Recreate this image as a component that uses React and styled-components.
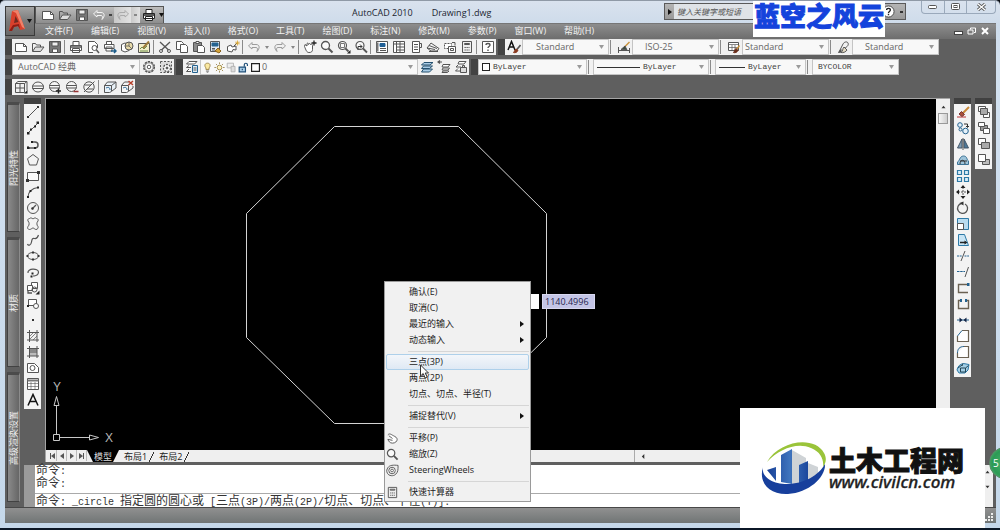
import React from "react";
import styled, { createGlobalStyle, css } from "styled-components";

const ui = `"Open Sans", "Noto Sans CJK SC", sans-serif`;
const mono = `"Liberation Mono", "Noto Sans CJK SC", monospace`;

const Global = createGlobalStyle`
  *, *::before, *::after { box-sizing: border-box; }
  body { margin: 0; background: #0b0f16; font-family: ${ui}; font-size: 9px; color: #222; overflow: hidden; }
  button, input, select { font: inherit; color: inherit; margin: 0; padding: 0; border: 0; background: none; border-radius: 0; outline: none; }
  button { display: inline-flex; align-items: center; justify-content: center; cursor: default; }
  svg { display: block; flex: none; }
`;

/* ---------- icons ---------- */

const I = {
  new: <><path d="M1.500 3.500h8l3 3v5h-11z" fill="#fff" /><path d="M9.500 3.500v3h3" /></>,
  open: <><path d="M1.500 11V3.500h3l1 1.500h4V7" /><path d="M1.500 11.500 4.500 7h8.500l-3.500 4.500z" fill="#ddd" /></>,
  save: <><path d="M1.500 1.500h11v11h-11z" fill="#777" /><path d="M4 2h6v4H4z" fill="#eee" /><path d="M4.500 9h5v3.500h-5z" fill="#fff" /></>,
  print: <><path d="M4 5V1.500h6V5M2 5.500h10.500v5H1.500v-5zM3.500 8.500h7v4h-7z" fill="#fff" /><path d="M2 7h10" strokeWidth="1.500" /></>,
  preview: <><path d="M7 12.500H2.500v-11h6l3 3V8" fill="#fff" /><circle cx="8.500" cy="8" r="2.500" fill="#fff" /><path d="m10.500 10 2.500 3" strokeWidth="1.500" /></>,
  plot: <><path d="M3.500 4.500v-3h5v3M1.500 4.500h9.500v4H1.500zM3 7h6v4H3z" fill="#fff" /><path d="M8 11h5M11 9l2 2-2 2" stroke="#1f5f8c" strokeWidth="1.500" /></>,
  globe: <><path d="M1.500 4.500 5 3l4 1.500v6L5 12l-3.500-1.500z" fill="#fff" /><circle cx="9" cy="6" r="4" fill="#e6d9a8" /><path d="M9 2v4l3 3M9 6H5" strokeWidth=".8" /></>,
  markup: <><path d="M1.500 3.500h11v9h-11z" fill="#f2eec8" /><path d="m3 9 2-2 2 2 3-3M3 11h8" stroke="#6b8c4a" /><path d="m6 8 6-6.500" stroke="#9c7a3a" strokeWidth="2" /></>,
  cut: <><path d="m2 2 8.500 8M12 2 3.500 10" strokeWidth="1.300" /><circle cx="3" cy="11" r="1.500" /><circle cx="11" cy="11" r="1.500" /></>,
  copy: <><path d="M1.500 1.500h5l2 2v6h-7z" fill="#fff" /><path d="M5.500 4.500h5l2 2v6h-7z" fill="#fff" /></>,
  paste: <><path d="M1.500 2.500h8v9h-8z" fill="#8b8b8b" /><path d="M4 1.500h3v2H4z" fill="#fff" /><path d="M5.500 5.500h5l2 2v5h-7z" fill="#fff" /></>,
  match: <><path d="M1.500 1.500h9v10h-9z" fill="#dfe9f2" /><path d="M3 3h6v3H3z" fill="#24628f" stroke="#24628f" /><path d="M3 8.500h3M3 10h3" /><path d="m6 11 3-3 3 3-2 2z" fill="#d5a43b" stroke="#8a6420" /></>,
  block: <><path d="M1.500 6.500 5 5l1 2 4-1v4l-3-.5-1 2.500-4.500-1z" fill="#fff" /><path d="m8 6 3-3" /><path d="M11.500.5v5M9 3h5M10 1.500l3 3M13 1.500l-3 3" stroke="#d9a52e" strokeWidth=".8" /></>,
  undo: <path d="M5 2.500 1.500 6 5 9V7.500h4c1.500 0 2 1.500 1 4 3-3 3-7-1-7H5z" />,
  redo: <path d="M9 2.500 12.500 6 9 9V7.500H5c-1.500 0-2 1.500-1 4-3-3-3-7 1-7h4z" />,
  pan: <><path d="M2 4.500 4 6V3.500c1-1 1.500 0 1.500 1 .5-1.500 2-1 2 0 1-1 2 0 2 1v4c0 2-1 3-3.500 3S3 10 1.500 6.500z" fill="#fff" /><path d="M11 .5v5M8.500 3h5" stroke="#222" strokeWidth="1.300" /></>,
  zoom: <><circle cx="5.500" cy="5.500" r="4" fill="#fafafa" strokeWidth="1.300" /><path d="m8.500 8.500 4 4" strokeWidth="2" /></>,
  zoomwin: <><circle cx="5.500" cy="5.500" r="4" fill="#fafafa" strokeWidth="1.200" /><path d="M3.500 3.500h4v4h-4z" strokeWidth=".8" /><path d="m8.500 8.500 3 3" strokeWidth="1.800" /><path d="m10 13.500 3.500-3.500v3.500z" fill="#222" stroke="none" /></>,
  zoomprev: <><circle cx="6" cy="5.500" r="4" fill="#fafafa" strokeWidth="1.200" /><path d="m9 8.500 4 4" strokeWidth="1.800" /><path d="M4 10V6.500h4M6 4.500l2 2-2 2" stroke="#333" /></>,
  props: <><path d="M1.500 1.500h11v11h-11z" fill="#fff" /><path d="M2.500 2.500v9" strokeWidth="2" stroke="#777" /><path d="M5 3.500h5v3H5z" fill="#1f5f96" stroke="#1f5f96" /><path d="M5 8.500h6M5 10.500h6" /></>,
  design: <><path d="M1.500 1.500h11v11h-11z" fill="#fff" /><path d="M1.500 4h11M4.500 2v10M8 2v10M4.500 7h8M4.500 10h8" /></>,
  palette: <><path d="M3.500 1.500h7v11h-7z" fill="#fff" /><path d="M10.500 3.500h2v4h-2M5 4.500h4M5 7h4M5 9.500h4" /></>,
  sheet: <path d="m1 8 4-5 8 5.500-2 2.500H5L1 8l8 1.500M3 5.500l8 3M3 11.500h9" fill="#f4f4f4" />,
  markset: <><path d="M1.500 3.500h7v5h-7z" fill="#fff" strokeDasharray="2 1" /><path d="M5.500 6.500h7v6h-7z" fill="#fff" /><path d="M9 2.500h3v3M7.500 8.500h3v2h-3z" /></>,
  calc: <><path d="M2.500 1.500h9v11h-9z" fill="#eee" /><path d="M4.500 3.500h5v1h-5z" fill="#fff" /><path d="M4.500 7.500h5M4.500 10h5" strokeDasharray="1.300 .7" /></>,
  help: <><path d="M1.500 1.500h11v11h-11z" fill="#fff" /><path d="M5 5c0-2 4-2 4 0 0 1.500-2 1.500-2 3M7 9.500V11" strokeWidth="1.400" /></>,
  textstyle: <><path d="M1 10 4.500 1.500 8 10M2.300 7h4.500" stroke="#111" strokeWidth="1.500" /><path d="m13.500 5-4 5" stroke="#555" strokeWidth="1.600" /><path d="m9 9 2 1.500c-1 2-3 2.500-4.500 2 1-1 1-2.500 2.500-3.500z" fill="#8b3b20" stroke="#8b3b20" /></>,
  dimstyle: <><path d="M1.500 7v6M12.500 8v5M2 10.500h10" /><path d="m12.500 2-5 5" strokeWidth="1.500" stroke="#c9923b" /><path d="M8 6 4 9.500l6 .5z" fill="#3c4c3c" /></>,
  tablestyle: <><path d="M1.500 2.500h10v8h-10z" fill="#fff" /><path d="M1.500 4.500h10M5 5v5M8 5v5M2 7.500h9" strokeWidth=".7" /><path d="m12.500 5.500-3 4" stroke="#c9923b" strokeWidth="1.400" /><path d="m9 8.500 2 2c-1 2-3 2.500-4.500 2 1-1 1-3 2.500-4z" fill="#6b2f1c" stroke="#6b2f1c" /></>,
  leaderstyle: <><path d="m2 12 4-8c1-2 4-3 5-1s-1 4-3 5" /><path d="m7 7 3 3c-1 2-4 3-6 2.500C6 11 5.500 8.500 7 7z" fill="#e4dbc4" /><path d="m1.500 12.500 2.500-3v2.500z" fill="#444" /></>,
  gear: <><circle cx="7" cy="7" r="5.300" strokeWidth="1.500" strokeDasharray="2.300 1" /><circle cx="7" cy="7" r="4.200" fill="#fff" strokeWidth=".8" /><circle cx="7" cy="7" r="1.800" /></>,
  wsgear: <><path d="M1.500 1.500h11v11h-11z" fill="#ddd" strokeDasharray="2 1.500" /><circle cx="8" cy="8" r="3.500" fill="#fff" strokeDasharray="2 1" strokeWidth="1.300" /><circle cx="8" cy="8" r="1" fill="#444" /></>,
  layers: <><path d="M4 1.500h8L9.500 4H1.500zM4 5.500 1.500 7.500H6M4 9 1.500 11.500H6" fill="#fff" /><path d="M7.500 5.500h5v7h-5z" fill="#dcecf7" stroke="#24628f" /><path d="M8.500 8h3M8.500 10h3" /></>,
  bulb: <><path d="M7 1.500c-4 0-4 4-2 6v2h4v-2c2-2 2-6-2-6z" fill="#fbe9a2" stroke="#8d7433" /><path d="M5 11.500h4M6 13h2" /></>,
  sun: <><circle cx="7" cy="7" r="3" fill="#fff3bd" stroke="#8d7433" /><path d="M7 .500v2M7 11.500v2M.500 7h2M11.500 7h2M2.500 2.500l1.300 1.300M10.200 10.200l1.300 1.300M11.500 2.500l-1.300 1.300M3.800 10.200l-1.300 1.300" stroke="#8d7433" /></>,
  freeze: <g stroke="#aaa"><path d="M1.500 1.500h8v6h-8z" fill="#eee" /><path d="M6.500 5.500h5v7h-5z" fill="#ddd" /></g>,
  lock: <><path d="M1.500 6.500h8v6h-8z" fill="#a9cce6" stroke="#1f4f78" strokeWidth="1.500" /><path d="M8 6V3.500c0-2.500 4-2.500 4 0V5M5.500 8.500v2" stroke="#1f4f78" strokeWidth="1.500" /></>,
  square: <path d="M2 2h10v10H2z" fill="#fff" stroke="#222" strokeWidth="1.500" />,
  laycur: <><path d="M4 2.500h9l-3 2.500H1.500zM3.500 6h9l-3 2.500H1.500zM3.500 9h9l-3 3H1.500z" fill="#a9cce6" stroke="#24506e" /></>,
  layprev: <><path d="M6 4.500h7L11 7H5zM6 8h6.500L11 10H5zM6 11h6l-1.500 1.500H5z" fill="#fff" /><path d="M1 2h4M3 .5 1 2l2 1.500" strokeWidth="1.200" /></>,
  laystate: <><path d="M5 1.500h7L10 4H4zM4 5 2 7h5M4 8.500 1.500 11H6" fill="#fff" /><path d="M6.500 7.500h6v5h-6zM8.500 7V5.500h2V7" fill="#ddd" /></>,
  box: <><path d="M1.500 3.500h9v9h-9zM4 1.500h9v9M1.500 3.500 4 1.500M10.500 3.500l2.500-2M6 3v9M1.500 8h9" /><path d="m10 13.500 3.500-3.500v3.500z" fill="#222" stroke="none" /></>,
  sphere: <><ellipse cx="7" cy="7" rx="5.500" ry="5" fill="#f5f5f5" /><path d="M1.500 6h11M1.500 8.500h11" /></>,
  sphereplus: <><ellipse cx="6.500" cy="6.500" rx="5" ry="5" fill="#f5f5f5" /><path d="M1.500 5.500h10M1.500 8h10" /><path d="M10.500 8.500v5M8 11h5" stroke="#222" strokeWidth="1.500" /></>,
  sphereminus: <><ellipse cx="6.500" cy="6.500" rx="5" ry="5" fill="#f5f5f5" /><path d="M1.500 5.500h10M1.500 8h10" /><path d="M8.500 11.500h5" stroke="#933" strokeWidth="1.500" /></>,
  spherecut: <><circle cx="7" cy="7" r="5.200" fill="#f5f5f5" /><path d="M2 12 12.500 1.500M3 5h6M5 9h6" /></>,
  cube: <><path d="M1.500 5.500h7v6l-2 1h-5zM1.500 5.500l3-3.500H13v6l-4 3M8.500 5.500 13 2" fill="#e8f1f8" /><path d="M3 8c2-1 4-1 4 2" stroke="#24628f" /></>,
  cubex: <><path d="M1.500 5.500h7v6l-2 1h-5zM1.500 5.500l3-3.500H9M13 6v2l-4 3" fill="#f5f5f5" /><path d="M3 8c2-1 4-1 4 2" stroke="#24628f" /><path d="m8.500 1 4.500 4M13 1 8.500 5" stroke="#b5402c" strokeWidth="1.500" /></>,
  line: <><path d="m2 12 10-10" /><path d="M1 11h2v2H1zM11 1h2v2h-2z" fill="#333" stroke="none" /></>,
  xline: <><path d="m2 12 10-10" /><path d="M1 11h2.500v2.500H1zM10.500 .5H13V3h-2.500zM4 7.500h2v2H4zM8 4.500h2v2H8z" fill="#222" stroke="none" /></>,
  pline: <><path d="M2 11h7c4 0 4-6 0-6H6M2 11V9" strokeWidth="1.500" /><path d="M1 10h2.500v2H1zM8 10h2v2H8zM5 4h2v2H5z" fill="#222" stroke="none" /></>,
  polygon: <path d="m7 1.500 5.500 4.200-2 6.300h-7l-2-6.300z" />,
  rect: <><path d="M1.500 3.500h11v8h-11z" fill="#fafafa" /><path d="M0 10h3v3H0zM11 2h3v3h-3z" fill="#333" stroke="none" /></>,
  arc: <><path d="M2 12c0-5 4-9 10-9.500" strokeWidth="1.200" /><path d="M1 11h2v2H1zM3.500 5h2v2h-2zM11 1.500h2v2h-2z" fill="#222" stroke="none" /></>,
  circle: <><circle cx="7" cy="7" r="5.500" /><path d="m6 8 4-4" strokeWidth="1.300" /><circle cx="6.500" cy="7.500" r="1" fill="#333" /></>,
  cloud: <path d="M3.500 1.500c1-1 2.500-.5 3.500.5 1-1 2.500-1.500 3.500-.5 1.500 0 2 1.500 1.500 2.500-1.500 1.500-1.500 4 0 5.500.5 1.500-.5 3-2 3-1 0-2-1.500-3-1.500s-2 1.500-3.500 1.500C2 12.500 1 11 2 9.500c1.500-1.500 1.500-4 0-5.500-.5-1 0-2.500 1.500-2.500z" />,
  spline: <path d="M1.500 11c1 2.500 3.500 1 4-2s1-4 3-3.500S11.500 5 12.500 2" strokeWidth="1.200" />,
  ellipse: <><ellipse cx="7" cy="7" rx="5.500" ry="3.500" /><path d="M0.500 6h2v2h-2zM11.500 6h2v2h-2zM6 2.500h2v2H6zM6 9.500h2v2H6z" fill="#333" stroke="none" /></>,
  ellipsearc: <><path d="M2 8c-1-5 10.500-5 10.500-1S7 11 7 11" strokeWidth="1.200" /><path d="M5.500 7.500h2v2h-2zM4.500 10.500h2v2h-2z" fill="#222" stroke="none" /></>,
  insert: <><path d="M5.500 1.500h6v6h-6z" fill="#fff" /><path d="M1.500 4.500h5v5h-5z" fill="#fff" /><circle cx="8.500" cy="8.500" r="2.500" /><path d="M2 9v3h4" strokeWidth="1.300" /><path d="m9.500 13.500 4-4v4z" fill="#222" stroke="none" /></>,
  makeblock: <><path d="M2.500 2.500h8v6h-8z" fill="#fff" /><circle cx="10" cy="9" r="2.500" fill="#fff" /><path d="M1 8h2v2H1z" fill="#222" stroke="none" /></>,
  point: <path d="M6 6h2v2H6z" fill="#333" stroke="none" />,
  hatch: <><path d="M3.500 1v12M11 1v12M1 3.500h12M1 11h12" /><path d="m4 7 3-3M4 10l6-6M7 11l4-4" strokeWidth=".7" /></>,
  gradient: <><path d="M4 4h7v4H4z" fill="#888" stroke="none" /><path d="M4 8h7v3H4z" fill="#bbb" stroke="none" /><path d="M3.500 1v12M11 1v12M1 3.500h12M1 11h12" /></>,
  region: <><path d="M1.500 2.500h7l4 4v5h-11z" fill="#fff" /><circle cx="6.500" cy="7" r="2.500" /></>,
  table: <><path d="M1.500 1.500h11v11h-11z" fill="#fff" /><path d="M1.500 3.500h11" strokeWidth="2" stroke="#777" /><path d="M2 6.500h10M2 9.500h10M5 5v7M9 5v7" strokeWidth=".6" /></>,
  mtext: <path d="M2 12.500 7 1.500l5 11M3.800 8.500h6.400" stroke="#111" strokeWidth="1.500" />,
  erase: <><path d="M1 12h9" stroke="#b33" /><path d="m13 2-6 6" stroke="#c98a3a" strokeWidth="2" /><path d="m5.500 6.500 3 3L6 11.500 3 9z" fill="#a8503a" stroke="#733" /></>,
  copyobj: <g stroke="#24628f"><circle cx="4" cy="4" r="2.300" fill="#e5f1f9" /><circle cx="9.500" cy="10" r="2.800" fill="#e5f1f9" /><circle cx="4.500" cy="8.500" r="1.500" /><path d="M8 3h3.500v3M10 5l1.500 1.500L13 5" stroke="#333" /></g>,
  mirror: <><path d="M6 2 1.500 11H6z" fill="#7c9cb4" stroke="#456" /><path d="m8 2 4.500 9H8z" fill="#4c7898" stroke="#456" /><path d="M7 1v12" /></>,
  offset: <g stroke="#3d7395"><path d="M1.500 11.500V9c2-.5 2-6 6-6s3 4 5 5v3.500z" fill="#9ec4da" /><path d="M4 11c0-5 5-5 5 0M4 8h7" stroke="#333" /></g>,
  array: <path d="M1.500 1.500h4v4h-4zM8.500 1.500h4v4h-4zM1.500 8.500h4v4h-4zM8.500 8.500h4v4h-4z" fill="#d9edf8" stroke="#2d79a6" strokeWidth="1.200" />,
  move: <><path d="M7 2v10M2 7h10" strokeDasharray="2 1" /><path d="m7 0 2.500 3h-5zM7 14l2.500-3h-5zM0 7l3-2.500v5zM14 7l-3-2.500v5z" fill="#222" stroke="none" /></>,
  rotate: <><path d="M5.500 2.500A5 5 0 1 0 9 3" strokeWidth="1.300" /><path d="m3.500 2 4-1.500v4z" fill="#333" stroke="none" /></>,
  scale: <><path d="M1.500 1.500h11v11h-11z" fill="#b9dcf0" stroke="#2d79a6" /><path d="M1.500 6.500h6v6h-6z" fill="#fff" /></>,
  stretch: <><path d="M2.500 1.500h6l4 11h-10z" fill="#c8e4f4" stroke="#2d79a6" /><path d="M4 9.500h6" stroke="#222" strokeWidth="1.500" /><path d="m8.500 7.500 3 2-3 2z" fill="#222" stroke="none" /></>,
  trim: <><path d="M1 7h5M8.500 7H13" strokeDasharray="2 .7" stroke="#24628f" /><path d="M5 12 9 2" /></>,
  extend: <><path d="M1 6.500h8" strokeDasharray="2.500 .7" stroke="#24628f" /><path d="M9 12 12.500 2" /></>,
  breakpt: <><path d="M12 3.500H2.500v8H12" stroke="#6b6253" strokeWidth="1.400" /><path d="M11 2h2.500v3H11z" fill="#24628f" stroke="none" /></>,
  break: <><path d="M4.500 3.500h-2v8h10v-8h-2" stroke="#6b6253" strokeWidth="1.400" /><path d="M4 2h2v3H4zM9 2h2v3H9z" fill="#24628f" stroke="none" /></>,
  join: <><path d="M1 7h12" stroke="#24628f" /><path d="m3.500 4.500 3 2.500-3 2.500zM10.500 4.500l-3 2.500 3 2.500z" fill="#124" stroke="none" /></>,
  chamfer: <><path d="M6 1.500h6.500v11h-11V7" fill="#fff" stroke="#6b6253" strokeWidth="1.200" /><path d="M1.500 7 6 1.500" stroke="#24628f" /></>,
  fillet: <><path d="M8 1.500h4.500v11h-11V8" fill="#fff" stroke="#6b6253" strokeWidth="1.200" /><path d="M1.500 8c0-4 2-6.500 6.500-6.500" stroke="#24628f" /></>,
  explode: <><path d="M1 9c.5-3.500 3-6 6.500-6.500l5.500 1-1 5.500-3 3H3z" fill="#a4cfe6" stroke="#2d79a6" /><path d="M4.500 7h5v4h-5zM2 7l4-3M9.500 7l3-2.500M7 2.500 6 5" stroke="#245" /></>,
  front: <><path d="M1.500 1.500h7v5h-7zM6.500 7.500h6v5h-6z" fill="#fff" /><path d="M3.500 3.500h7v6h-7z" fill="#aaa" /></>,
  back: <><path d="M3.500 4.500h7v5h-7z" fill="#999" /><path d="M1.500 1.500h6v4h-6zM6.500 7.500h6v5h-6z" fill="#fff" /></>,
  above: <><path d="M1.500 1.500h7v6h-7z" fill="#fff" /><path d="M4.500 5.500h8v6h-8z" fill="#aaa" /></>,
  below: <><path d="M5.500 6.500h7v5h-7z" fill="#bbb" /><path d="M1.500 1.500h7v7h-7z" fill="#fff" /></>,
  hand: <><path d="M2 3c2-2 4 0 6 1s4 2 4 4-2 4-5 4-4-2-5-4l5 1M3 4l4 3" fill="#fff" /></>,
  wheel: <><path d="M2 4c2-3 6-3 11-2.500 0 5 0 7-2.500 9.500S3 13 1.500 10 1 6 2 4z" fill="#eee" /><circle cx="6.500" cy="7" r="3.500" fill="#fff" /><circle cx="6.500" cy="7" r="1.500" /></>,
};

const Icon = ({ n, size = 14, color = "#555" }) => (
  <svg width={size} height={size} viewBox="0 0 14 14" fill="none" stroke={color} aria-hidden="true">{I[n]}</svg>
);

const Caret = ({ color = "#9a9a9a" }) => (
  <svg width="5" height="4" viewBox="0 0 5 4" aria-hidden="true"><path d="M0 0h5L2.500 4z" fill={color} /></svg>
);

/* ---------- window ---------- */

const Shell = styled.div`
  position: relative;
  min-height: 100vh;
  display: flex;
  flex-direction: column;
  padding: 0 4px 5px 5px;
  background: linear-gradient(#d9e2ee, #cddbea 24px, #d3e1f0 60px, #c5d8ea);
  border-top: 1px solid #8f99a6;
  border-bottom: 2px solid #0b1726;
  border-radius: 5px 5px 0 0;
  overflow: hidden;
`;

const Header = styled.header`
  display: flex;
  align-items: flex-end;
  height: 38px;
  background: linear-gradient(transparent 22px, #5f5f5f 22px, #8d8d8d 23px, #6d6d6d);
`;

const AppButton = styled.button`
  width: 30px;
  height: 30px;
  margin: 0 0 3px 0;
  gap: 1px;
  background: linear-gradient(#a4a4a4, #7a7a7a 50%, #686868);
  border: 1px solid #3a3a3a;
`;

const HeaderMain = styled.div`
  flex: 1;
  display: flex;
  flex-direction: column;
  height: 38px;
`;

const TitleRow = styled.div`
  display: flex;
  justify-content: space-between;
  height: 22px;
`;

const QuickAccess = styled.div`
  display: flex;
  align-items: center;
  align-self: flex-end;
  height: 17px;
  width: 129px;
  padding-left: 3px;
  background: linear-gradient(#bdbdbd, #8d8d8d);
  border: 1px solid #555;
  border-bottom: 0;
`;

const ToolButton = styled.button`
  width: ${(p) => p.$w || 17}px;
  height: 16px;
  flex: none;
  opacity: ${(p) => (p.$faded ? 0.55 : 1)};
  ${(p) => p.$glow && css`background: linear-gradient(90deg, #c9c9c9, #e2e2e2);`}
`;

const Title = styled.h1`
  display: flex;
  flex: 1;
  gap: 19px;
  align-items: center;
  margin: 0;
  padding-left: 188px;
  font-size: 9px;
  font-weight: 400;
  color: #1b2531;
`;

const Search = styled.form`
  display: flex;
  align-items: center;
  width: 242px;
  height: 17px;
  margin: 2px 15px 0 0;
  border: 1px solid #5a5a5a;
  background: linear-gradient(#b5b5b5, #999);
`;

const SearchInput = styled.input`
  flex: 1;
  min-width: 0;
  height: 15px;
  padding-left: 3px;
  font-size: 8px;
  font-style: italic;
  background: #dfe3e7;
  &::placeholder { color: #555; opacity: 1; }
`;

const WindowButtons = styled.div`
  display: flex;
  width: 75px;
  height: 13px;
  border: 1px solid #9aa9bb;
  border-top: 0;
  border-radius: 0 0 4px 4px;
  button { flex: 1; border-right: 1px solid #9aa9bb; }
  button:last-child { flex: 1.300; border: 0; }
`;

const MenuBar = styled.nav`
  display: flex;
  align-items: center;
  gap: 18px;
  height: 15px;
  padding: 0 5px 0 10px;
  color: #f2f2f2;
  white-space: nowrap;
  a { color: inherit; text-decoration: none; line-height: 15px; }
`;

const MdiButtons = styled.div`
  display: flex;
  margin-left: auto;
  button { width: 13px; height: 13px; }
`;

/* ---------- toolbars ---------- */

const Frame = styled.div`
  flex: 1;
  display: flex;
  flex-direction: column;
  background: #5f5f5f;
`;

const ToolbarRows = styled.div`
  display: flex;
  flex-direction: column;
  gap: 4px;
  padding-bottom: 3px;
`;

const ToolbarRow = styled.div`
  display: flex;
  gap: 2px;
  height: 16px;
`;

const Toolbar = styled.div`
  display: flex;
  align-items: center;
  height: 16px;
  background: #f1f1f1;
  border-left: 7px solid #434343;
`;

const Divider = styled.span`
  width: ${(p) => p.$w || 4}px;
  height: 14px;
  flex: none;
  background: linear-gradient(90deg, transparent 1px, #8a8a8a 1px, #8a8a8a 2px, transparent 2px);
`;

const Combo = styled.label`
  display: flex;
  align-items: center;
  gap: ${(p) => p.$gap || 3}px;
  width: ${(p) => p.$w}px;
  height: 16px;
  padding: 0 4px 0 ${(p) => p.$pad || 3}px;
  background: #f8f8f8;
  border: 1px solid #c4c4c4;
  color: #666;
`;

const Select = styled.select`
  appearance: none;
  flex: 1;
  min-width: 0;
  height: 14px;
  line-height: 14px;
  ${(p) => p.$mono && css`font-family: ${mono}; font-size: 8px; color: #3c3c3c;`}
`;

const Stroke = styled.span`
  width: ${(p) => p.$w}px;
  height: 1px;
  background: #333;
`;

const Swatch = styled.span`
  width: 8px;
  height: 8px;
  border: 1px solid #222;
  background: #fff;
`;

function ComboBox({ w, pad, label, value, monoText, children }) {
  return (
    <Combo $w={w} $pad={pad}>
      {children}
      <Select aria-label={label} $mono={monoText}><option>{value}</option></Select>
      <Caret />
    </Combo>
  );
}

const Tools = ({ items }) =>
  items.map((it, i) => {
    if (it === "|") return <Divider key={i} />;
    if (it === "v") return <ToolButton key={i} $w={9} aria-label="更多"><svg width="4" height="3" viewBox="0 0 4 3"><path d="M0 0h4L2 3z" fill="#888" /></svg></ToolButton>;
    return <ToolButton key={i} aria-label={it} $faded={it === "undo" || it === "redo"}><Icon n={it} /></ToolButton>;
  });

/* ---------- workspace ---------- */

const Workspace = styled.div`
  flex: 1;
  display: flex;
`;

const Palettes = styled.aside`
  display: flex;
  flex-direction: column;
  gap: 5px;
  width: 19px;
  padding: 4px 4px 5px 2px;
`;

const PaletteTab = styled.button`
  flex: 1;
  border: 1px solid #424242;
  border-right-color: #8c8c8c;
  border-top: 3px solid #4b4b4b;
  background: linear-gradient(90deg, #8a8a8a, #666);
  color: #eee;
  span { writing-mode: vertical-rl; text-orientation: sideways; transform: rotate(180deg); line-height: 12px; }
`;

const Main = styled.div`
  flex: 1;
  min-width: 0;
  display: flex;
  flex-direction: column;
`;

const Upper = styled.div`
  flex: 1;
  display: flex;
  align-items: flex-start;
  gap: 4px;
  padding-right: 4px;
`;

const SideBar = styled.div`
  display: flex;
  flex-direction: column;
  width: 17px;
  padding-bottom: 1px;
  border-top: 6px solid #404040;
  background: #f3f3f3;
`;

const DrawingWindow = styled.section`
  flex: 1;
  align-self: stretch;
  display: flex;
  flex-direction: column;
  margin-bottom: 3px;
  border: 1px solid #a5a5a5;
  border-width: 1px 0 0 1px;
`;

const ViewRow = styled.div`
  flex: 1;
  display: flex;
`;

const Canvas = styled.div`
  position: relative;
  flex: 1;
  background: #000;
`;

const Shape = styled.svg`
  position: absolute;
  left: 200px;
  top: 26px;
`;

const Ucs = styled.svg`
  position: absolute;
  left: 6px;
  bottom: 4px;
`;

const VScroll = styled.div`
  display: flex;
  flex-direction: column;
  align-items: center;
  gap: 4px;
  width: 14px;
  padding-top: 6px;
  background: #efefef;
`;

const Thumb = styled.span`
  width: 10px;
  height: 11px;
  border: 1px solid #999;
  background: linear-gradient(90deg, #f6f6f6, #cfcfcf);
`;

const TabRow = styled.div`
  display: flex;
  height: 12px;
  padding-left: 1px;
  background: #efefef;
`;

const NavButton = styled.button`
  width: 10px;
  height: 11px;
  border-right: 1px solid #bbb;
`;

const Tab = styled.button`
  height: 12px;
  padding: 0 7px;
  ${(p) => p.$active
    ? css`color: #ddd; background: #000; clip-path: polygon(0 0, 100% 0, calc(100% - 6px) 100%, 6px 100%);`
    : css`padding: 0 7px 0 5px; background: linear-gradient(117deg, transparent calc(100% - 5px), #333 calc(100% - 5px), #333 calc(100% - 4px), transparent calc(100% - 4px));`}
`;

const HScroll = styled.div`
  display: flex;
  align-items: center;
  width: 316px;
  margin-left: auto;
  padding-left: 6px;
  border-left: 1px solid #aaa;
`;

/* ---------- command line ---------- */

const Command = styled.section`
  display: flex;
  height: 42px;
  margin-right: 3px;
  border-left: 11px solid #9b9b9b;
  background: #fff;
`;

const CommandText = styled.div`
  flex: 1;
  display: flex;
  flex-direction: column;
  justify-content: space-between;
  font-family: ${mono};
  font-size: 12px;
  line-height: 12px;
  color: #333;
  white-space: pre;
  p { margin: 0; padding-left: 1px; }
  small { font-size: 10px; }
`;

const Prompt = styled.p`
  && { padding-top: 2px; }
  height: 14px;
  border-top: 1px solid #aaa;
`;

const CommandScroll = styled.div`
  display: flex;
  flex-direction: column;
  justify-content: space-between;
  align-items: center;
  width: 11px;
  padding: 5px 0 18px;
  background: #efefef;
`;

const StatusBar = styled.footer`
  display: flex;
  justify-content: flex-end;
  align-items: flex-end;
  height: 16px;
  padding: 0 2px 1px;
  border-top: 1px solid #484848;
  background: linear-gradient(#909090, #707575);
`;

/* ---------- overlays ---------- */

const DynamicInput = styled.div`
  position: absolute;
  left: 500px;
  top: 293px;
  display: flex;
  gap: 3px;
  input { height: 15px; }
`;

const RadiusField = styled.input`
  && { width: 39px; background: #fff; }
`;

const ValueField = styled.input`
  && { width: 53px; padding-left: 2px; background: #c4c5e6; color: #26264f; border: 1px solid #d8d8f0; }
`;

const ContextMenu = styled.div`
  position: absolute;
  left: 384px;
  top: 280px;
  width: 147px;
  padding: 2px 1px 1px;
  background: #f1f1f1;
  border: 1px solid #9a9a9a;
  color: #1c1c1c;
`;

const MenuItem = styled.button`
  && { display: grid; }
  grid-template-columns: 23px 1fr 10px;
  align-items: center;
  width: 100%;
  height: 16px;
  text-align: left;
  line-height: 16px;
  ${(p) => p.$hot && css`
    border: 1px solid #aed0ea;
    border-radius: 2px;
    background: linear-gradient(#f3f6fa, #dfe9f4);
    line-height: 14px;
    grid-template-columns: 22px 1fr 9px;
  `}
`;

const MenuRule = styled.hr`
  height: 1px;
  margin: 3px 0 2px 22px;
  border: 0;
  background: #d6d6d6;
`;

const Cursor = styled.svg`
  position: absolute;
  left: 419px;
  top: 363px;
`;

const NameMark = styled.div`
  position: absolute;
  left: 753px;
  top: -1px;
  width: 132px;
  height: 37px;
  background: #fff;
  text-align: center;
  font: 900 26px/30px "Noto Sans CJK SC", sans-serif;
  color: #1443dc;
  -webkit-text-stroke: 1px #1443dc;
`;

const SiteLogo = styled.a`
  position: absolute;
  right: 15px;
  bottom: -2px;
  display: flex;
  align-items: center;
  gap: 1px;
  width: 245px;
  height: 122px;
  padding: 0 0 2px 21px;
  background: #fff;
  color: #111;
  text-decoration: none;
`;

const SiteName = styled.strong`
  display: block;
  font: 900 27px/28px "Noto Sans CJK SC", sans-serif;
  font-style: oblique 8deg;
  -webkit-text-stroke: 1px #111;
`;

const SiteUrl = styled.span`
  display: block;
  font: italic 500 17px/16px "Noto Sans", sans-serif;
  color: #222;
  -webkit-text-stroke: 0.300px #222;
`;

const Badge = styled.div`
  position: absolute;
  right: -21px;
  top: 446px;
  width: 32px;
  height: 32px;
  padding-left: 3px;
  border: 1px solid #5a8a66;
  border-radius: 50%;
  background: radial-gradient(circle, #45b56c, #2c9a55 60%, #5cc27e);
  color: #fff;
  font-size: 10px;
  line-height: 30px;
`;

/* ---------- data ---------- */

const menus = ["文件(F)", "编辑(E)", "视图(V)", "插入(I)", "格式(O)", "工具(T)", "绘图(D)", "标注(N)", "修改(M)", "参数(P)", "窗口(W)", "帮助(H)"];
const standardTools = ["new", "open", "save", "|", "print", "preview", "plot", "globe", "markup", "|", "cut", "copy", "paste", "match", "block", "|", "undo", "v", "redo", "v", "|", "pan", "zoom", "zoomwin", "zoomprev", "|", "props", "design", "palette", "sheet", "markset", "calc", "|", "help"];
const drawTools = ["line", "xline", "pline", "polygon", "rect", "arc", "circle", "cloud", "spline", "ellipse", "ellipsearc", "insert", "makeblock", "point", "hatch", "gradient", "region", "table", "mtext"];
const modifyTools = ["erase", "copyobj", "mirror", "offset", "array", "move", "rotate", "scale", "stretch", "trim", "extend", "breakpt", "break", "join", "chamfer", "fillet", "explode"];
const contextItems = [
  { t: "确认(E)" }, { t: "取消(C)" }, { t: "最近的输入", sub: true }, { t: "动态输入", sub: true }, null,
  { t: "三点(3P)", hot: true }, { t: "两点(2P)" }, { t: "切点、切点、半径(T)" }, null,
  { t: "捕捉替代(V)", sub: true }, null,
  { t: "平移(P)", icon: "hand" }, { t: "缩放(Z)", icon: "zoom" }, { t: "SteeringWheels", icon: "wheel" }, null,
  { t: "快速计算器", icon: "calc" },
];

const Arrow = ({ d, w = 6, h = 6, color = "#333" }) => (
  <svg width={w} height={h} viewBox="0 0 6 6" aria-hidden="true"><path d={d} fill={color} /></svg>
);

export default function App() {
  return (
    <>
      <Global />
      <Shell>
        <Header>
          <AppButton aria-label="应用程序菜单">
            <svg width="18" height="24" viewBox="0 0 18 24">
              <path d="M1 22 4 2l6-1 7 19-5 1-2-4-4 1-2 4z" fill="#d8402c" />
              <path d="m4 2 6-1 7 19-3-2L8 4z" fill="#f0826a" />
              <path d="m1 22 4-6 6-1 1 5-2-3-4 1-2 4z" fill="#8f1d14" />
              <path d="m6 14 1.500-7 3 6z" fill="#6e2a22" />
            </svg>
            <Caret color="#111" />
          </AppButton>
          <HeaderMain>
            <TitleRow>
              <QuickAccess>
                <ToolButton aria-label="新建"><Icon n="new" /></ToolButton>
                <ToolButton aria-label="打开"><Icon n="open" /></ToolButton>
                <ToolButton aria-label="保存"><Icon n="save" /></ToolButton>
                <ToolButton aria-label="放弃"><Icon n="undo" color="#f4f4f4" /></ToolButton>
                <ToolButton $w={7} aria-label="放弃列表"><svg width="3" height="2"><path d="M0 0h3v2H0z" fill="#444" /></svg></ToolButton>
                <ToolButton $glow aria-label="重做"><Icon n="redo" color="#aaa" /></ToolButton>
                <ToolButton $glow $w={9} aria-label="重做列表"><svg width="3" height="2"><path d="M0 0h3v2H0z" fill="#888" /></svg></ToolButton>
                <ToolButton aria-label="打印"><Icon n="print" color="#222" /></ToolButton>
                <ToolButton $w={9} aria-label="自定义"><Caret color="#111" /></ToolButton>
              </QuickAccess>
              <Title><span>AutoCAD 2010</span><span>Drawing1.dwg</span></Title>
              <Search>
                <ToolButton $w={9} type="button" aria-label="展开"><Arrow d="M1 0l4 3-4 3z" color="#111" /></ToolButton>
                <SearchInput aria-label="搜索" placeholder="键入关键字或短语" />
                <ToolButton type="button" aria-label="帮助">
                  <svg width="13" height="13" viewBox="0 0 14 14"><circle cx="7" cy="7" r="6" fill="#fff" stroke="#444" /><path d="M5 5.500c0-2.500 4-2.500 4 0 0 1.500-2 1.500-2 3M7 9.500V11" fill="none" stroke="#222" strokeWidth="1.500" /></svg>
                </ToolButton>
                <ToolButton $w={8} type="button" aria-label="帮助列表"><svg width="3" height="2"><path d="M0 0h3v2H0z" fill="#333" /></svg></ToolButton>
              </Search>
              <WindowButtons>
                <button aria-label="最小化"><svg width="9" height="5"><rect x=".5" y=".5" width="8" height="3" rx="1" fill="#fff" stroke="#555" /></svg></button>
                <button aria-label="还原"><svg width="9" height="8"><rect x=".5" y=".5" width="8" height="6" rx="1" fill="#fff" stroke="#555" /><rect x="3" y="2.500" width="3" height="2" fill="none" stroke="#555" /></svg></button>
                <button aria-label="关闭"><svg width="9" height="8" viewBox="0 0 9 8"><path d="m1 1 7 6M8 1 1 7" stroke="#555" strokeWidth="3" /><path d="m1 1 7 6M8 1 1 7" stroke="#fff" strokeWidth="1.300" /></svg></button>
              </WindowButtons>
            </TitleRow>
            <MenuBar>
              {menus.map((m) => <a href="#menu" key={m}>{m}</a>)}
              <MdiButtons>
                <button aria-label="最小化图形"><svg width="9" height="8"><rect x=".5" y="4.500" width="8" height="3" fill="#fff" stroke="#444" /></svg></button>
                <button aria-label="还原图形"><svg width="9" height="8" fill="none" stroke="#fff"><path d="M1 3h5v4H1zM3.500 2.500V1h5v4.500H7" /></svg></button>
                <button aria-label="关闭图形"><svg width="8" height="8" viewBox="0 0 8 8"><path d="m1 1 6 6M7 1 1 7" stroke="#fff" strokeWidth="2" /></svg></button>
              </MdiButtons>
            </MenuBar>
          </HeaderMain>
        </Header>

        <Frame>
          <ToolbarRows>
            <ToolbarRow>
              <Toolbar><Tools items={standardTools} /></Toolbar>
              <Toolbar>
                <Tools items={["textstyle"]} />
                <ComboBox w={87} pad={13} label="文字样式" value="Standard" />
                <Divider $w={6} />
                <Tools items={["dimstyle"]} />
                <ComboBox w={87} pad={12} label="标注样式" value="ISO-25" />
                <Divider $w={6} />
                <Tools items={["tablestyle"]} />
                <ComboBox w={87} pad={2} label="表格样式" value="Standard" />
                <Divider $w={6} />
                <Tools items={["leaderstyle"]} />
                <ComboBox w={87} pad={12} label="引线样式" value="Standard" />
              </Toolbar>
            </ToolbarRow>
            <ToolbarRow>
              <Toolbar>
                <ComboBox w={128} pad={5} label="工作空间" value="AutoCAD 经典" />
                <Tools items={["gear", "wsgear"]} />
              </Toolbar>
              <Toolbar>
                <Tools items={["layers"]} />
                <Combo $w={218} $pad={1} $gap={1}>
                  {["bulb", "sun", "freeze", "lock", "square"].map((n) => <Icon key={n} n={n} size={11} />)}
                  <Select aria-label="图层"><option>0</option></Select>
                  <Caret />
                </Combo>
                <Tools items={["laycur", "layprev", "laystate"]} />
              </Toolbar>
              <Toolbar>
                <ComboBox w={109} label="颜色" value="ByLayer" monoText><Swatch /></ComboBox>
                <Divider $w={6} />
                <ComboBox w={116} label="线型" value="ByLayer" monoText><Stroke $w={43} /></ComboBox>
                <Divider $w={6} />
                <ComboBox w={91} label="线宽" value="ByLayer" monoText><Stroke $w={26} /></ComboBox>
                <Divider $w={6} />
                <ComboBox w={87} pad={5} label="打印样式" value="BYCOLOR" monoText />
              </Toolbar>
            </ToolbarRow>
            <ToolbarRow>
              <Toolbar><Tools items={["box", "sphere", "sphereplus", "sphereminus", "spherecut", "|", "cube", "cubex"]} /></Toolbar>
            </ToolbarRow>
          </ToolbarRows>

          <Workspace>
            <Palettes>
              {["阳光特性", "材质", "高级渲染设置"].map((p) => <PaletteTab key={p}><span>{p}</span></PaletteTab>)}
            </Palettes>
            <Main>
              <Upper>
                <SideBar><Tools items={drawTools} /></SideBar>
                <DrawingWindow>
                  <ViewRow>
                    <Canvas>
                      <Shape width="301" height="300" viewBox="0 0 301 300" fill="none" stroke="#d4d4d4">
                        <path d="M88.500 1.500h124l88 87v124l-88 86h-124l-88-86v-124z" />
                      </Shape>
                      <Ucs width="68" height="68" viewBox="0 0 68 68" fill="none" stroke="#c8c8c8">
                        <path d="M1.500 56.500h6v6h-6zM4.500 56V27M8 59.500h30M2 27.500l2.500-9 2.500 9zM37.500 57l9 2.500-9 2.500z" />
                        <text x="1" y="13" fill="#b5b5b5" stroke="none" fontFamily="Liberation Sans" fontSize="12">Y</text>
                        <text x="53" y="64" fill="#b5b5b5" stroke="none" fontFamily="Liberation Sans" fontSize="12">X</text>
                      </Ucs>
                    </Canvas>
                    <VScroll><Arrow d="M3 1l3 4H0z" w={5} h={4} /><Thumb /></VScroll>
                  </ViewRow>
                  <TabRow>
                    {["M1 0h1v6H1zM6 0v6L2 3z", "M5 0v6L1 3z", "M1 0v6l4-3z", "M4 0h1v6H4zM0 0v6l4-3z"].map((d) => (
                      <NavButton key={d} aria-label="切换布局"><Arrow d={d} color="#555" /></NavButton>
                    ))}
                    <Tab $active>模型</Tab>
                    <Tab>布局1</Tab>
                    <Tab>布局2</Tab>
                    <HScroll><Arrow d="M4 0v6L1 3z" w={5} h={5} /></HScroll>
                  </TabRow>
                </DrawingWindow>
                <SideBar><Tools items={modifyTools} /></SideBar>
                <SideBar><Tools items={["front", "back", "above", "below"]} /></SideBar>
              </Upper>
              <Command>
                <CommandText>
                  <div>
                    <p>命令<small>:</small></p>
                    <p>命令<small>:</small></p>
                  </div>
                  <Prompt>命令<small>: _circle </small>指定圆的圆心或<small> [</small>三点<small>(3P)/</small>两点<small>(2P)/</small>切点、切点、半径<small>(T)]:</small></Prompt>
                </CommandText>
                <CommandScroll><Arrow d="M3 1l3 4H0z" w={5} h={4} /><Arrow d="M0 1h6L3 5z" w={5} h={4} /></CommandScroll>
              </Command>
            </Main>
          </Workspace>
          <StatusBar>
            <svg width="9" height="9" viewBox="0 0 9 9" fill="#eee"><path d="M6 0h2v2H6zM6 3h2v2H6zM6 6h2v2H6zM3 3h2v2H3zM3 6h2v2H3zM0 6h2v2H0z" /></svg>
          </StatusBar>
        </Frame>

        <DynamicInput>
          <RadiusField aria-label="第一点 X" />
          <ValueField aria-label="第一点 Y" defaultValue="1140.4996" />
        </DynamicInput>

        <ContextMenu role="menu">
          {contextItems.map((it, i) => it === null ? <MenuRule key={i} /> : (
            <MenuItem key={i} role="menuitem" $hot={it.hot}>
              <span>{it.icon && <Icon n={it.icon} size={13} />}</span>
              <span>{it.t}</span>
              {it.sub && <Arrow d="M1 0l4 3-4 3z" color="#111" />}
            </MenuItem>
          ))}
        </ContextMenu>
        <Cursor width="11" height="15" viewBox="0 0 11 15"><path d="M1.500 1v11l2.700-2.500 2 4.500 2-1-2-4h3.300z" fill="#fff" stroke="#333" /></Cursor>

        <NameMark>蓝空之风云</NameMark>

        <SiteLogo href="#site">
          <svg width="67" height="54" viewBox="0 0 67 54">
            <defs>
              <linearGradient id="tower" x1="0" x2="1"><stop offset="0" stopColor="#173f96" /><stop offset=".55" stopColor="#3f74bd" /><stop offset="1" stopColor="#1b479d" /></linearGradient>
            </defs>
            <path d="M31 9 45 17v26H31zM47 22l10 4v8l-10 8z" fill="#cfd3d6" />
            <path d="M6 21C18 0 53-6 63 12c3 5 2 10-1 14 1-7-2-15-12-19C36 1 18 8 6 21z" fill="#9ac43a" />
            <path d="M20 14 31 8v35l-11-2zM38 24l9-4v20l-9 3zM6 29l9-3v14z" fill="url(#tower)" />
            <path d="M2 26c-2 10 10 17 24 17 17 0 32-9 38-20 1 13-16 29-37 30C9 54-3 42 2 26z" fill="#173f9c" />
          </svg>
          <span>
            <SiteName>土木工程网</SiteName>
            <SiteUrl>www.civilcn.com</SiteUrl>
          </span>
        </SiteLogo>

        <Badge>5</Badge>
      </Shell>
    </>
  );
}
